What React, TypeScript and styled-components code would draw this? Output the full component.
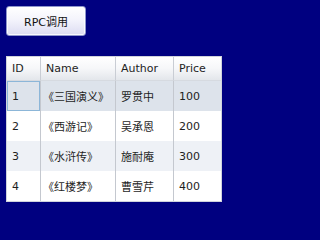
import React from "react";
import styled, { createGlobalStyle } from "styled-components";

const Global = createGlobalStyle`
  html, body { margin: 0; padding: 0; background: #000080; }
  body { font-family: "DejaVu Sans", "Noto Sans CJK SC", sans-serif; font-size: 11px; }
  * { box-sizing: border-box; }
`;

const Page = styled.div`
  width: 238px;
  height: 214px;
  padding: 6px;
  display: flex;
  flex-direction: column;
  align-items: flex-start;
  gap: 20px;
`;

const Button = styled.button`
  width: 80px;
  height: 30px;
  border: 1px solid #8f96cc;
  border-radius: 3px;
  background: linear-gradient(#ffffff 0%, #f4f4fc 45%, #dcdcf2 100%);
  box-shadow: inset 0 0 0 1px rgba(255, 255, 255, 0.8);
  font-family: "DejaVu Sans", "Noto Sans CJK SC", sans-serif;
  font-size: 11px;
  color: #111;
  padding: 0;
  cursor: pointer;
`;

const Table = styled.div`
  width: 216px;
  border: 1px solid #cfd3dc;
  background: #ffffff;
  display: grid;
  grid-template-columns: 34px 75px 58px 47px;
`;

const HeaderCell = styled.div<{ $last?: boolean }>`
  height: 24px;
  display: flex;
  align-items: center;
  padding-left: 5px;
  color: #1e1e1e;
  background: linear-gradient(#ffffff 0%, #f6f7f9 50%, #e3e6eb 100%);
  border-right: ${(p) => (p.$last ? "none" : "1px solid #c9cdd4")};
  border-bottom: 1px solid #d6dae0;
`;

const Cell = styled.div<{ $bg: string; $last?: boolean; $focus?: boolean }>`
  height: 30px;
  display: flex;
  align-items: center;
  padding-left: 5px;
  color: #1e1e1e;
  background: ${(p) => p.$bg};
  border-right: ${(p) => (p.$last ? "none" : "1px solid #c4c8cf")};
  box-shadow: ${(p) => (p.$focus ? "inset 0 0 0 1px #8cb6d8" : "none")};
`;

const BookCell = styled(Cell)`
  padding-left: 2px;
`;

const rows = [
  { id: "1", name: "《三国演义》", author: "罗贯中", price: "100" },
  { id: "2", name: "《西游记》", author: "吴承恩", price: "200" },
  { id: "3", name: "《水浒传》", author: "施耐庵", price: "300" },
  { id: "4", name: "《红楼梦》", author: "曹雪芹", price: "400" },
];

const rowBg = ["#dde3eb", "#ffffff", "#eef1f6", "#ffffff"];

export default function App() {
  return (
    <>
      <Global />
      <Page>
        <Button>RPC调用</Button>
        <Table>
          <HeaderCell>ID</HeaderCell>
          <HeaderCell>Name</HeaderCell>
          <HeaderCell>Author</HeaderCell>
          <HeaderCell $last>Price</HeaderCell>
          {rows.map((r, i) => (
            <React.Fragment key={r.id}>
              <Cell $bg={rowBg[i]} $focus={i === 0}>{r.id}</Cell>
              <BookCell $bg={rowBg[i]}>{r.name}</BookCell>
              <Cell $bg={rowBg[i]}>{r.author}</Cell>
              <Cell $bg={rowBg[i]} $last>{r.price}</Cell>
            </React.Fragment>
          ))}
        </Table>
      </Page>
    </>
  );
}
